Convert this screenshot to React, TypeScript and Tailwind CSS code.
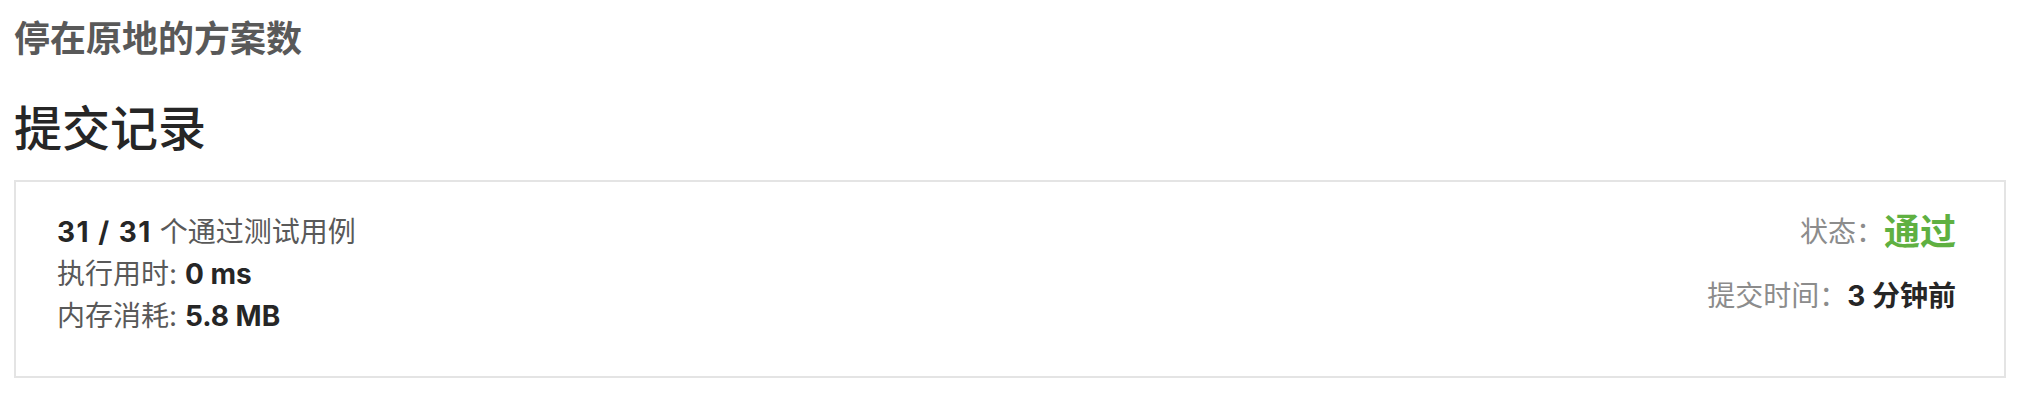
import React from "react";

const font = "font-['Inter','Noto_Sans_CJK_SC',sans-serif]";

export default function App() {
  return (
    <div className={`w-[2020px] h-[406px] bg-white ${font}`}>
      <div className="px-[14px]">
        {/* problem title */}
        <h1 className="pt-[16px] text-[36px] leading-[46px] font-bold text-[#595959]">
          停在原地的方案数
        </h1>

        {/* section heading */}
        <h2 className="mt-[40px] text-[48px] leading-[54px] font-medium text-[#262626]">
          提交记录
        </h2>

        {/* result card */}
        <div className="mt-[24px] border-2 border-[#e4e4e4] h-[198px] pl-[41px] pr-[48px] pt-[29px] flex justify-between">
          <div className="text-[28px] leading-[42px] text-[#595959]">
            <div>
              <span className="font-bold text-[#262626] tracking-[1.5px]">31 / 31</span> 个通过测试用例
            </div>
            <div>
              执行用时: <span className="font-bold text-[#262626]">0 ms</span>
            </div>
            <div>
              内存消耗: <span className="font-bold text-[#262626]">5.8 MB</span>
            </div>
          </div>

          <div className="flex flex-col items-end">
            <div className="flex items-center h-[42px]">
              <span className="text-[28px] text-[#8c8c8c]">状态：</span>
              <span className="text-[36px] font-bold text-[#5fb041]">通过</span>
            </div>
            <div className="mt-[22px] flex items-center h-[42px] text-[28px]">
              <span className="text-[#8c8c8c]">提交时间：</span>
              <span className="font-bold text-[#262626]">3 分钟前</span>
            </div>
          </div>
        </div>
      </div>
    </div>
  );
}
